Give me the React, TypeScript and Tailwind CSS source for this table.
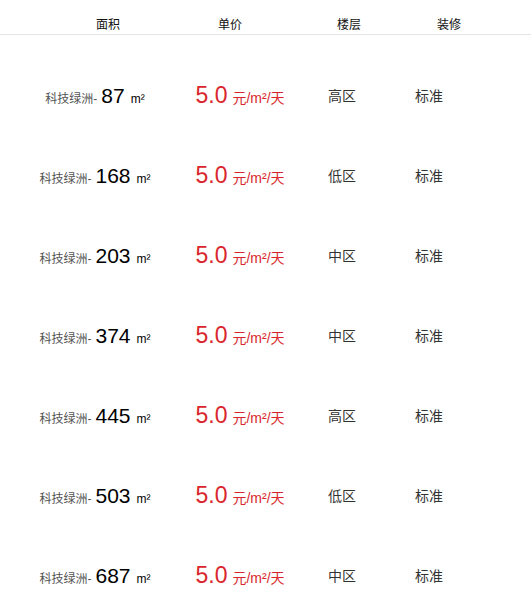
import React from "react";

const rows = [
  { area: "87", floor: "高区" },
  { area: "168", floor: "低区" },
  { area: "203", floor: "中区" },
  { area: "374", floor: "中区" },
  { area: "445", floor: "高区" },
  { area: "503", floor: "低区" },
  { area: "687", floor: "中区" },
];

const font = { fontFamily: '"Liberation Sans", Arial, "Noto Sans CJK SC", sans-serif' };

export default function App() {
  return (
    <div className="w-[531px] bg-white text-[#333]" style={font}>
      <div className="flex h-[35px] items-end border-b border-[#e5e5e5] pb-[3px] text-[12px] leading-[12px] text-[#111]">
        <div className="w-[96px]" />
        <div className="w-[122px]">面积</div>
        <div className="w-[119px]">单价</div>
        <div className="w-[100px]">楼层</div>
        <div>装修</div>
      </div>
      <div className="pt-[21px]">
        {rows.map((r) => (
          <div key={r.area} className="flex h-[80px] items-center">
            <div className="flex w-[190px] items-baseline justify-center">
              <span className="text-[12px] text-[#555]">科技绿洲-</span>
              <span className="ml-[4px] text-[21px] leading-none text-black">{r.area}</span>
              <span className="ml-[6px] text-[12px] text-black">m²</span>
            </div>
            <div className="flex w-[100px] items-baseline justify-center text-[#d9262c]">
              <span className="text-[23px] leading-none">5.0</span>
              <span className="ml-[5px] text-[14px]">元/m²/天</span>
            </div>
            <div className="w-[104px] pl-[38px] text-[14px]">{r.floor}</div>
            <div className="text-[14px] pl-[21px]">标准</div>
          </div>
        ))}
      </div>
    </div>
  );
}
